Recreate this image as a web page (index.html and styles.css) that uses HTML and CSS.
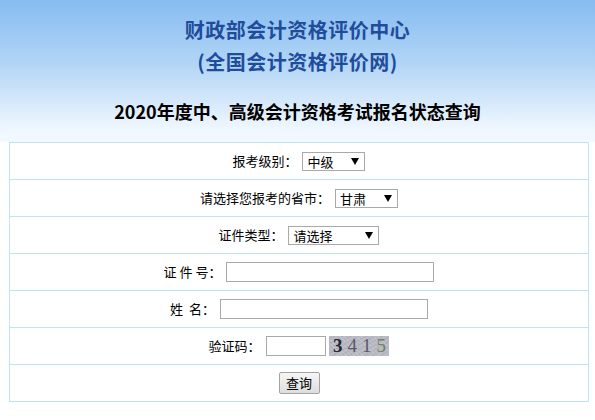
FILE: index.html
```html
<!DOCTYPE html>
<html lang="zh-CN">
<head>
  <meta charset="UTF-8" />
  <title>2020年度中、高级会计资格考试报名状态查询</title>
  <link rel="stylesheet" href="styles.css">
</head>
<body>
  <div class="header">
    <h1>财政部会计资格评价中心<br>(全国会计资格评价网)</h1>
    <h2>2020年度中、高级会计资格考试报名状态查询</h2>
  </div>

  <table class="query">
    <tr>
      <td>
        <label>报考级别<span class="colon">：</span></label>
        <span class="select w63"><select><option>中级</option><option>高级</option></select><svg viewBox="0 0 8 7"><path d="M0 0h8L4 7z"/></svg></span>
      </td>
    </tr>
    <tr>
      <td>
        <label>请选择您报考的省市<span class="colon">：</span></label>
        <span class="select w63"><select><option>甘肃</option></select><svg viewBox="0 0 8 7"><path d="M0 0h8L4 7z"/></svg></span>
      </td>
    </tr>
    <tr>
      <td>
        <label>证件类型<span class="colon">：</span></label>
        <span class="select w91"><select><option>请选择</option></select><svg viewBox="0 0 8 7"><path d="M0 0h8L4 7z"/></svg></span>
      </td>
    </tr>
    <tr>
      <td>
        <label>证&nbsp;件&nbsp;号<span class="colon">：</span></label>
        <input type="text" class="text w208">
      </td>
    </tr>
    <tr>
      <td>
        <label>姓&nbsp;&nbsp;名<span class="colon">：</span></label>
        <input type="text" class="text w208">
      </td>
    </tr>
    <tr>
      <td>
        <label>验证码<span class="colon">：</span></label>
        <input type="text" class="text w60">
        <span class="captcha"><b class="c1">3</b><b class="c2">4</b><b class="c3">1</b><b class="c4">5</b></span>
      </td>
    </tr>
    <tr>
      <td>
        <button type="button">查询</button>
      </td>
    </tr>
  </table>
</body>
</html>
```

FILE: styles.css
```css
* {
  box-sizing: border-box;
}

body {
  margin: 0;
  background: #fff;
  font-family: "Noto Sans CJK SC", "Noto Sans", sans-serif;
  color: #000;
}

.header {
  background: linear-gradient(#86bcf1 0%, #b2d5f6 45%, #eef6fe 90%, #fbfdff 115%);
  height: 142px;
  padding-top: 14px;
  text-align: center;
}

h1 {
  margin: 0;
  font-size: 20px;
  line-height: 32px;
  letter-spacing: 0.5px;
  font-weight: bold;
  color: #1f4d9b;
}

h2 {
  margin: 21px 0 0;
  font-size: 18px;
  line-height: 24px;
  font-weight: bold;
}

.query {
  width: 580px;
  margin: 0 0 0 9px;
  border-collapse: collapse;
  border: 1px solid #bfe3f1;
}

.query td {
  height: 37px;
  padding: 0;
  border-bottom: 1px solid #bfe3f1;
  text-align: center;
  font-size: 13px;
  line-height: 18px;
}

.query td > * {
  vertical-align: middle;
}

label {
  margin-right: 2px;
}

.colon {
  font-family: "Noto Sans CJK TC", "Noto Sans CJK SC", sans-serif;
}

.select {
  position: relative;
  display: inline-block;
  height: 19px;
}

.select select {
  appearance: none;
  -webkit-appearance: none;
  width: 100%;
  height: 19px;
  margin: 0;
  padding: 0 0 0 4px;
  border: 1px solid #a9a9a9;
  background: #fff;
  font-family: inherit;
  font-size: 13px;
  line-height: 17px;
  color: #000;
  vertical-align: top;
}

.select svg {
  position: absolute;
  right: 6px;
  top: 6px;
  width: 8px;
  height: 7px;
  fill: #000;
  pointer-events: none;
}

.w63 { width: 63px; }
.w91 { width: 91px; }
.w208 { width: 208px; }
.w60 { width: 60px; }

.text {
  height: 20px;
  margin: 0;
  padding: 0 2px;
  border: 1px solid #a9a9a9;
  background: #fff;
  font-size: 13px;
}

.captcha {
  display: inline-flex;
  align-items: center;
  justify-content: center;
  gap: 5px;
  width: 60px;
  height: 20px;
  margin-left: 1px;
  background:
    repeating-linear-gradient(45deg, rgba(255,255,255,0.12) 0 1px, transparent 1px 3px),
    repeating-linear-gradient(-30deg, rgba(90,90,110,0.12) 0 1px, transparent 1px 4px),
    #b9b9c3;
  font-family: "Liberation Serif", serif;
  font-size: 19px;
  line-height: 20px;
}

.captcha b { font-weight: normal; }
.c1 { color: #2b2535; font-weight: bold !important; }
.c2 { color: #585866; }
.c3 { color: #5a5a68; }
.c4 { color: #6f8266; }

button {
  width: 41px;
  height: 22px;
  padding: 0;
  border: 1px solid #a3a3a3;
  border-radius: 2px;
  background: linear-gradient(#f6f6f6, #dddddd);
  font-family: inherit;
  font-size: 13px;
  line-height: 18px;
  color: #000;
}
```
